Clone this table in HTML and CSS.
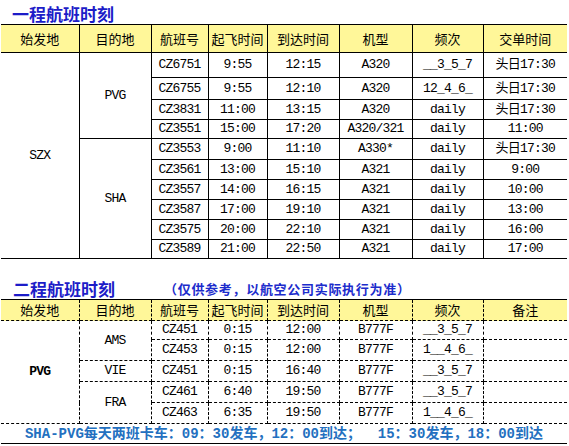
FILE: index.html
```html
<!DOCTYPE html>
<html lang="zh-CN">
<head>
<meta charset="utf-8">
<title>航班时刻</title>
<link rel="stylesheet" href="styles.css">
</head>
<body>
<div class="page">
  <h1 class="title t1">一程航班时刻</h1>
  <table class="sched solid">
    <colgroup>
      <col class="c1"><col class="c2"><col class="c3"><col class="c4"><col class="c5"><col class="c6"><col class="c7"><col class="c8">
    </colgroup>
    <tr class="head h28">
      <th>始发地</th><th>目的地</th><th>航班号</th><th>起飞时间</th><th>到达时间</th><th>机型</th><th>频次</th><th>交单时间</th>
    </tr>
    <tr class="h25">
      <td rowspan="10">SZX</td><td rowspan="4">PVG</td>
      <td>CZ6751</td><td>9:55</td><td>12:15</td><td>A320</td><td>__3_5_7</td><td>头日17:30</td>
    </tr>
    <tr class="h22"><td>CZ6755</td><td>9:55</td><td>12:10</td><td>A320</td><td>12_4_6_</td><td>头日17:30</td></tr>
    <tr class="h20"><td>CZ3831</td><td>11:00</td><td>13:15</td><td>A320</td><td>daily</td><td>头日17:30</td></tr>
    <tr class="h19"><td>CZ3551</td><td>15:00</td><td>17:20</td><td>A320/321</td><td>daily</td><td>11:00</td></tr>
    <tr class="h21">
      <td rowspan="6">SHA</td>
      <td>CZ3553</td><td>9:00</td><td>11:10</td><td>A330*</td><td>daily</td><td>头日17:30</td>
    </tr>
    <tr class="h20"><td>CZ3561</td><td>13:00</td><td>15:10</td><td>A321</td><td>daily</td><td>9:00</td></tr>
    <tr class="h20"><td>CZ3557</td><td>14:00</td><td>16:15</td><td>A321</td><td>daily</td><td>10:00</td></tr>
    <tr class="h20"><td>CZ3587</td><td>17:00</td><td>19:10</td><td>A321</td><td>daily</td><td>13:00</td></tr>
    <tr class="h20"><td>CZ3575</td><td>20:00</td><td>22:10</td><td>A321</td><td>daily</td><td>16:00</td></tr>
    <tr class="h19"><td>CZ3589</td><td>21:00</td><td>22:50</td><td>A321</td><td>daily</td><td>17:00</td></tr>
  </table>

  <div class="title2">
    <span class="title">二程航班时刻</span><span class="note">（仅供参考，以航空公司实际执行为准）</span>
  </div>

  <table class="sched dashed">
    <colgroup>
      <col class="c1"><col class="c2"><col class="c3"><col class="c4"><col class="c5"><col class="c6"><col class="c7"><col class="c8">
    </colgroup>
    <tr class="head h21">
      <th>始发地</th><th>目的地</th><th>航班号</th><th>起飞时间</th><th>到达时间</th><th>机型</th><th>频次</th><th>备注</th>
    </tr>
    <tr class="h19">
      <td rowspan="5" class="bold">PVG</td><td rowspan="2">AMS</td>
      <td>CZ451</td><td>0:15</td><td>12:00</td><td>B777F</td><td>__3_5_7</td><td></td>
    </tr>
    <tr class="h21"><td>CZ453</td><td>0:15</td><td>12:00</td><td>B777F</td><td>1__4_6_</td><td></td></tr>
    <tr class="h21"><td>VIE</td><td>CZ451</td><td>0:15</td><td>16:40</td><td>B777F</td><td>__3_5_7</td><td></td></tr>
    <tr class="h21"><td rowspan="2">FRA</td><td>CZ461</td><td>6:40</td><td>19:50</td><td>B777F</td><td>__3_5_7</td><td></td></tr>
    <tr class="h21"><td>CZ463</td><td>6:35</td><td>19:50</td><td>B777F</td><td>1__4_6_</td><td></td></tr>
    <tr class="foot h20">
      <td colspan="8">SHA-PVG每天两班卡车：09：30发车，12：00到达；&nbsp;&nbsp;15：30发车，18：00到达</td>
    </tr>
  </table>
</div>
</body>
</html>
```

FILE: styles.css
```css
html, body {
  margin: 0;
  padding: 0;
  background: #ffffff;
}

.page {
  width: 569px;
  padding: 0 2px 0 1px;
  box-sizing: border-box;
}

.title {
  font-family: "Noto Sans CJK SC", sans-serif;
  font-weight: bold;
  font-size: 17px;
  color: #1c1cc8;
  margin: 0;
}

.t1 {
  height: 24px;
  line-height: 28px;
  padding-left: 11px;
}

.title2 {
  height: 40px;
  padding-top: 19px;
  box-sizing: border-box;
  line-height: 22px;
  padding-left: 12px;
  display: flex;
  align-items: center;
}

.note {
  font-family: "Noto Sans CJK SC", sans-serif;
  font-weight: bold;
  font-size: 13px;
  color: #1c2ccc;
  margin-left: 49px;
  letter-spacing: 0.7px;
}

.sched {
  border-collapse: collapse;
  table-layout: fixed;
  width: 566px;
}

.c1 { width: 78px; }
.c2 { width: 72px; }
.c3 { width: 57px; }
.c4 { width: 59px; }
.c5 { width: 72px; }
.c6 { width: 73px; }
.c7 { width: 71px; }
.c8 { width: 84px; }

.sched th,
.sched td {
  padding: 0;
  text-align: center;
  vertical-align: middle;
  line-height: 14px;
  color: #000;
}

.sched th {
  font-family: "Noto Sans CJK SC", sans-serif;
  font-weight: normal;
  font-size: 13px;
}

.sched td {
  font-family: "Liberation Mono", "Noto Sans CJK SC", monospace;
  font-size: 13px;
  letter-spacing: -0.8px;
}

.head th {
  background: #fff799;
}

.solid th,
.solid td {
  border: 1px solid #000;
}

.solid tr > :first-child {
  border-left: none;
}

.solid th:last-child,
.solid td:last-child {
  border-right: none;
}

.dashed th,
.dashed td {
  border: 1px dashed #000;
}

.dashed .head th {
  border-top: 1px solid #000;
}

.dashed tr > td[rowspan="5"],
.dashed .head th:first-child,
.dashed .foot td {
  border-left: none;
}

.dashed th:last-child,
.dashed td:last-child {
  border-right: none;
}

.dashed .foot td {
  border-bottom: 1px solid #000;
  border-right: none;
  font-family: "Liberation Mono", "Noto Sans CJK SC", monospace;
  font-weight: bold;
  font-size: 14px;
  letter-spacing: 0;
  color: #2370c0;
}

.bold {
  font-weight: bold;
}

.h28 { height: 28px; }
.h25 { height: 25px; }
.h22 { height: 22px; }
.h21 { height: 21px; }
.h20 { height: 20px; }
.h19 { height: 19px; }
```
